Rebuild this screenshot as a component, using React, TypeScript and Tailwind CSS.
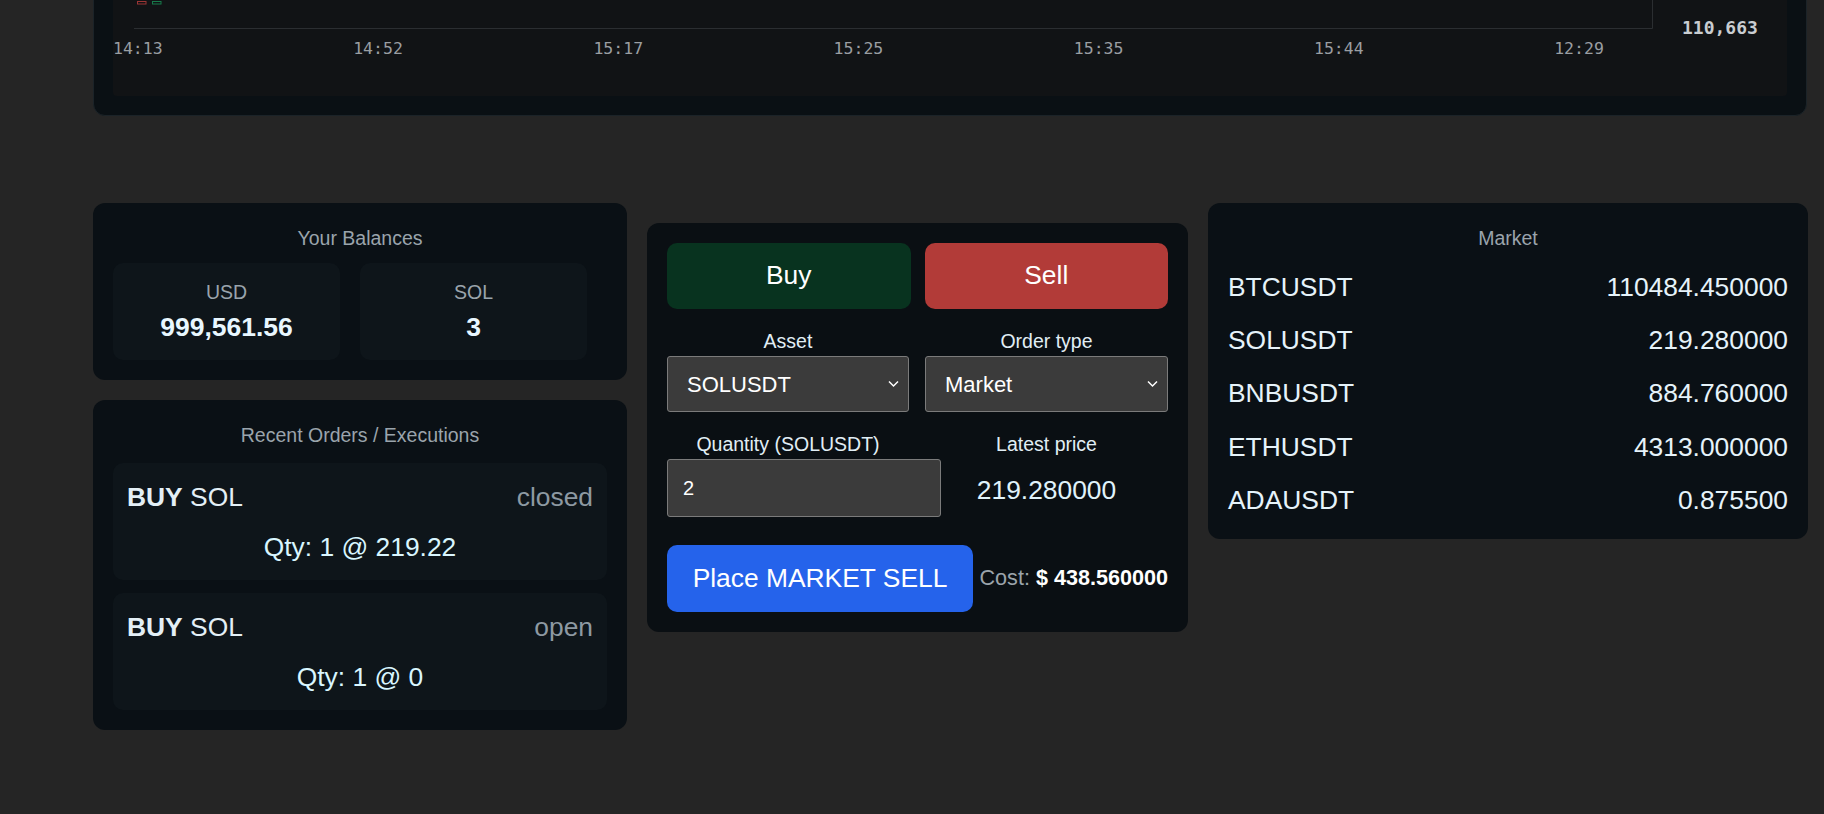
import React from "react";

const markets: [string, string][] = [
  ["BTCUSDT", "110484.450000"],
  ["SOLUSDT", "219.280000"],
  ["BNBUSDT", "884.760000"],
  ["ETHUSDT", "4313.000000"],
  ["ADAUSDT", "0.875500"],
];

const orders = [
  { side: "BUY", asset: "SOL", status: "closed", qty: "1", price: "219.22" },
  { side: "BUY", asset: "SOL", status: "open", qty: "1", price: "0" },
];

const timeLabels = ["14:13", "14:52", "15:17", "15:25", "15:35", "15:44", "12:29"];

function ChartCard() {
  return (
    <div className="-mt-[304px] ml-[93px] w-[1714px] rounded-[12px] border border-[#1b2328] bg-[#0a1014] px-[19px] py-[19px]">
      <div className="h-[380px] overflow-hidden rounded-[4px] bg-[#111315]">
        <svg width="1674" height="380" viewBox="0 0 1674 380">
          <line x1="1539.5" y1="0" x2="1539.5" y2="312.5" stroke="#2b2e31" strokeWidth="1" />
          <line x1="21" y1="312.5" x2="1539.5" y2="312.5" stroke="#2b2e31" strokeWidth="1" />
          <rect x="24.5" y="285.5" width="8.5" height="2.5" fill="none" stroke="#9b3535" strokeWidth="1" />
          <rect x="39.5" y="285.5" width="8.5" height="2.5" fill="none" stroke="#177a4b" strokeWidth="1" />
          {timeLabels.map((t, i) => (
            <text
              key={t}
              x={i * 240.2}
              y="337.5"
              fontFamily="'DejaVu Sans Mono', monospace"
              fontSize="16.5"
              fill="#9a9ea2"
            >
              {t}
            </text>
          ))}
          <text
            x="1569"
            y="318"
            fontFamily="'DejaVu Sans Mono', monospace"
            fontSize="18"
            fontWeight="bold"
            fill="#c9cdd1"
          >
            110,663
          </text>
        </svg>
      </div>
    </div>
  );
}

function BalancesCard() {
  return (
    <div className="h-[177px] rounded-[12px] bg-[#0a1015] pt-[24px]">
      <div className="text-center text-[19.5px] leading-[23px] text-[#9aa4ac]">Your Balances</div>
      <div className="mt-[13px] flex gap-[20px] pl-[20px]">
        {[
          ["USD", "999,561.56"],
          ["SOL", "3"],
        ].map(([name, value]) => (
          <div
            key={name}
            className="flex h-[97px] w-[227px] flex-col items-center rounded-[10px] bg-[#0e151a] pt-[18px]"
          >
            <div className="text-[19.5px] leading-[22px] text-[#9aa4ac]">{name}</div>
            <div className="mt-[9px] text-[26.5px] font-bold leading-[30px] text-[#e8f7ff]">{value}</div>
          </div>
        ))}
      </div>
    </div>
  );
}

function RecentOrders() {
  return (
    <div className="h-[330px] rounded-[12px] bg-[#0a1015] px-[20px] pt-[24px]">
      <div className="text-center text-[19.5px] leading-[23px] text-[#9aa4ac]">Recent Orders / Executions</div>
      <div className="mt-[16px] flex flex-col gap-[13px]">
        {orders.map((o, i) => (
          <div key={i} className="h-[117px] rounded-[10px] bg-[#0e151a] px-[14px] pt-[19px]">
            <div className="flex justify-between text-[26.4px] leading-[30px]">
              <span className="text-[#e3eff6]">
                <b className="font-bold">{o.side}</b> {o.asset}
              </span>
              <span className="text-[#8d99a2]">{o.status}</span>
            </div>
            <div className="mt-[20px] text-center text-[26.4px] leading-[30px] text-[#d9f6ff]">
              Qty: {o.qty} @ {o.price}
            </div>
          </div>
        ))}
      </div>
    </div>
  );
}

function Chevron() {
  return (
    <svg
      className="pointer-events-none absolute right-[10px] top-1/2 -translate-y-1/2"
      width="11"
      height="7"
      viewBox="0 0 11 7"
      fill="none"
    >
      <path d="M1 1l4.5 4.5L10 1" stroke="#ffffff" strokeWidth="1.5" />
    </svg>
  );
}

function FieldLabel({ children }: { children: React.ReactNode }) {
  return <div className="w-full text-center text-[19.5px] leading-[22px] text-[#e1eef5]">{children}</div>;
}

function OrderForm() {
  return (
    <div className="mt-[20px] w-[541px] rounded-[12px] bg-[#0a0f13] p-[20px]">
      <div className="grid grid-cols-2 gap-[14px]">
        <button className="h-[66px] rounded-[10px] bg-[#08331f] text-[26.4px] text-white">Buy</button>
        <button className="h-[66px] rounded-[10px] bg-[#b23b38] text-[26.4px] text-white">Sell</button>
      </div>

      <div className="mt-[21px] grid grid-cols-[242px_243px] gap-x-[16px]">
        <div>
          <FieldLabel>Asset</FieldLabel>
          <div className="relative mt-[4px]">
            <select
              defaultValue="SOLUSDT"
              className="h-[56px] w-full appearance-none rounded-[3px] border border-[#7b7b7b] bg-[#3b3b3b] pl-[19px] text-[22px] text-white outline-none"
            >
              <option>SOLUSDT</option>
              <option>BTCUSDT</option>
            </select>
            <Chevron />
          </div>
        </div>
        <div>
          <FieldLabel>Order type</FieldLabel>
          <div className="relative mt-[4px]">
            <select
              defaultValue="Market"
              className="h-[56px] w-full appearance-none rounded-[3px] border border-[#7b7b7b] bg-[#3b3b3b] pl-[19px] text-[22px] text-white outline-none"
            >
              <option>Market</option>
              <option>Limit</option>
            </select>
            <Chevron />
          </div>
        </div>
      </div>

      <div className="mt-[21px] grid grid-cols-[242px_243px] gap-x-[16px]">
        <div>
          <FieldLabel>Quantity (SOLUSDT)</FieldLabel>
          <input
            defaultValue="2"
            className="mt-[4px] h-[58px] w-[274px] rounded-[3px] border border-[#7b7b7b] bg-[#3b3b3b] pl-[15px] text-[20px] text-white outline-none"
          />
        </div>
        <div>
          <FieldLabel>Latest price</FieldLabel>
          <div className="mt-[4px] flex h-[58px] items-center justify-center pt-[5px] text-[26.4px] text-[#e0f3fb]">
            219.280000
          </div>
        </div>
      </div>

      <div className="mt-[28px] flex items-center justify-between">
        <button className="h-[67px] w-[306px] rounded-[10px] bg-[#2563eb] text-[26.4px] text-white">
          Place MARKET SELL
        </button>
        <span className="text-[21.6px] text-[#9ba4ab]">
          Cost: <b className="font-bold text-white">$ 438.560000</b>
        </span>
      </div>
    </div>
  );
}

function MarketCard() {
  return (
    <div className="h-[336px] w-[600px] rounded-[12px] bg-[#0a1015] px-[20px] pt-[24px]">
      <div className="text-center text-[19.5px] leading-[23px] text-[#9aa4ac]">Market</div>
      <div className="mt-[11px]">
        {markets.map(([sym, price]) => (
          <div key={sym} className="flex h-[53.25px] items-center justify-between text-[26.4px] text-[#e6f3fa]">
            <span>{sym}</span>
            <span>{price}</span>
          </div>
        ))}
      </div>
    </div>
  );
}

export default function App() {
  return (
    <div className="min-h-screen w-full overflow-hidden bg-[#252525] font-['Liberation_Sans',Arial,sans-serif]">
      <ChartCard />
      <div className="mt-[87px] flex items-start gap-[20px] pl-[93px]">
        <div className="flex w-[534px] flex-col gap-[20px]">
          <BalancesCard />
          <RecentOrders />
        </div>
        <OrderForm />
        <MarketCard />
      </div>
    </div>
  );
}
